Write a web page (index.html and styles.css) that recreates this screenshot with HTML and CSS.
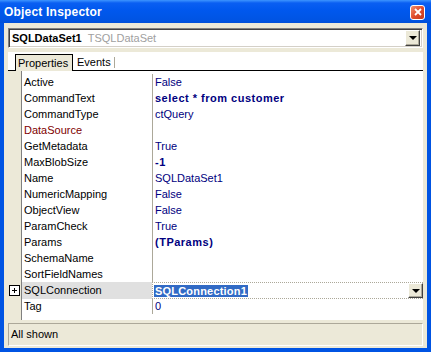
FILE: index.html
```html
<!DOCTYPE html>
<html lang="en">
<head>
    <meta charset="UTF-8">
    <title>Object Inspector</title>
    <link rel="stylesheet" href="styles.css">
</head>
<body>
    <div class="window">
        <div class="titlebar">
            <span class="title">Object Inspector</span>
            <button class="close" aria-label="Close">
                <svg width="8" height="8" viewBox="0 0 8 8"><path d="M1 1L7 7M7 1L1 7" stroke="#fff" stroke-width="1.8"/></svg>
            </button>
        </div>

        <div class="client">
            <!-- component selector -->
            <div class="combo">
                <span class="comp-name">SQLDataSet1</span>
                <span class="comp-type">TSQLDataSet</span>
                <span class="drop"><i class="arrow"></i></span>
            </div>

            <div class="tabs">
                <div class="tab active">Properties</div>
                <div class="tab">Events</div>
            </div>

            <div class="grid">
                <div class="row"><span class="mark"></span><span class="name">Active</span><span class="value">False</span></div>
                <div class="row"><span class="mark"></span><span class="name">CommandText</span><span class="value bold">select * from customer</span></div>
                <div class="row"><span class="mark"></span><span class="name">CommandType</span><span class="value">ctQuery</span></div>
                <div class="row"><span class="mark"></span><span class="name ref">DataSource</span><span class="value"></span></div>
                <div class="row"><span class="mark"></span><span class="name">GetMetadata</span><span class="value">True</span></div>
                <div class="row"><span class="mark"></span><span class="name">MaxBlobSize</span><span class="value bold">-1</span></div>
                <div class="row"><span class="mark"></span><span class="name">Name</span><span class="value">SQLDataSet1</span></div>
                <div class="row"><span class="mark"></span><span class="name">NumericMapping</span><span class="value">False</span></div>
                <div class="row"><span class="mark"></span><span class="name">ObjectView</span><span class="value">False</span></div>
                <div class="row"><span class="mark"></span><span class="name">ParamCheck</span><span class="value">True</span></div>
                <div class="row"><span class="mark"></span><span class="name">Params</span><span class="value bold">(TParams)</span></div>
                <div class="row"><span class="mark"></span><span class="name">SchemaName</span><span class="value"></span></div>
                <div class="row"><span class="mark"></span><span class="name">SortFieldNames</span><span class="value"></span></div>
                <div class="row selected">
                    <span class="mark"><i class="plus"></i></span>
                    <span class="name">SQLConnection</span>
                    <span class="value editor">
                        <span class="sel">SQLConnection1</span>
                        <span class="drop small"><i class="arrow"></i></span>
                    </span>
                </div>
                <div class="row"><span class="mark"></span><span class="name">Tag</span><span class="value">0</span></div>
            </div>

            <div class="status">All shown</div>
        </div>
    </div>
</body>
</html>
```

FILE: styles.css
```css
body {
    margin: 0;
    font-family: 'Liberation Sans', Arial, sans-serif;
    font-size: 11px;
    color: #000;
}

.window {
    width: 431px;
    height: 352px;
    display: flex;
    flex-direction: column;
    background: #0054e3;
}

.titlebar {
    height: 23px;
    flex: none;
    display: flex;
    align-items: center;
    justify-content: space-between;
    padding: 0 6px 0 4px;
    background: linear-gradient(#3d95ff 0, #0a5ff2 3px, #0058ee 10px, #0054e3 20px, #0050d8 23px);
}

.title {
    color: #fff;
    font-weight: bold;
    font-size: 12px;
    letter-spacing: 0.2px;
    margin-top: 1px;
}

.close {
    width: 15px;
    height: 15px;
    padding: 0;
    margin-top: 1px;
    border: 1px solid #fff;
    border-radius: 3px;
    background: linear-gradient(135deg, #f0906f, #e04c2c 50%, #c2391b);
    display: flex;
    align-items: center;
    justify-content: center;
}

.client {
    flex: 1;
    margin: 0 4px 4px;
    padding: 5px 4px 2px;
    background: #ece9d8;
    display: flex;
    flex-direction: column;
}

/* combo box */
.combo {
    height: 20px;
    box-sizing: border-box;
    display: flex;
    align-items: center;
    background: #fff;
    border: 1px solid;
    border-color: #808080 #fff #fff #808080;
    box-shadow: inset 1px 1px 0 #404040, inset -1px -1px 0 #d4d0c8;
    padding: 0 2px 0 3px;
}

.comp-name {
    font-weight: bold;
}

.comp-type {
    color: #a0a0a0;
    margin-left: 6px;
}

.drop {
    margin-left: auto;
    width: 15px;
    height: 16px;
    box-sizing: border-box;
    background: #ece9d8;
    border: 1px solid;
    border-color: #fff #404040 #404040 #fff;
    box-shadow: inset -1px -1px 0 #aca899;
    display: flex;
    align-items: center;
    justify-content: center;
}

.arrow {
    width: 0;
    height: 0;
    border-left: 4px solid transparent;
    border-right: 4px solid transparent;
    border-top: 4px solid #000;
}

/* tabs */
.tabs {
    margin-top: 4px;
    height: 19px;
    box-sizing: border-box;
    background: #fff;
    border-bottom: 1px solid #000;
    display: flex;
    align-items: flex-end;
    padding-left: 7px;
}

.tab {
    height: 15px;
    line-height: 15px;
    padding: 0 4px;
    position: relative;
}

.tab + .tab::after {
    content: '';
    position: absolute;
    right: 0;
    top: 2px;
    height: 11px;
    border-right: 1px solid #aca899;
}

.tab.active {
    height: 17px;
    line-height: 16px;
    padding: 0 4px 0 2px;
    background: #ece9d8;
    border: 1px solid #000;
    border-bottom: none;
    margin-bottom: -1px;
    box-sizing: border-box;
    width: 58px;
}

/* property grid */
.grid {
    flex: 1;
    padding-top: 3px;
    background: linear-gradient(to right, #ece9d8 13px, #808080 13px 14px, #fff 14px);
}

.row {
    display: grid;
    grid-template-columns: 14px 130px 1fr;
    height: 16px;
    line-height: 16px;
}

.name {
    padding-left: 2px;
    white-space: nowrap;
}

.name.ref {
    color: #800000;
}

.value {
    border-left: 1px solid #aca899;
    padding-left: 2px;
    color: #000080;
    white-space: nowrap;
}

.value.bold {
    font-weight: bold;
    letter-spacing: 0.5px;
}

.row.selected .name {
    background: #e0e0e0;
}

.value.editor {
    display: flex;
    align-items: center;
    padding-left: 1px;
    box-sizing: border-box;
    border: 1px dotted #aca899;
    border-right: none;
}

.sel {
    background: #316ac5;
    color: #fff;
    font-weight: bold;
    letter-spacing: 0.2px;
    line-height: 12px;
    padding: 0 1px;
}

.drop.small {
    height: 15px;
    width: 15px;
}

.mark {
    display: flex;
    align-items: center;
    padding-left: 1px;
}

.plus {
    width: 9px;
    height: 9px;
    border: 1px solid #000;
    background:
        linear-gradient(#000, #000) center / 5px 1px no-repeat,
        linear-gradient(#000, #000) center / 1px 5px no-repeat,
        #fff;
}

/* status bar */
.status {
    margin-top: 3px;
    height: 23px;
    box-sizing: border-box;
    line-height: 21px;
    padding-left: 2px;
    border: 1px solid;
    border-color: #aca899 #fff #fff #aca899;
}
```
